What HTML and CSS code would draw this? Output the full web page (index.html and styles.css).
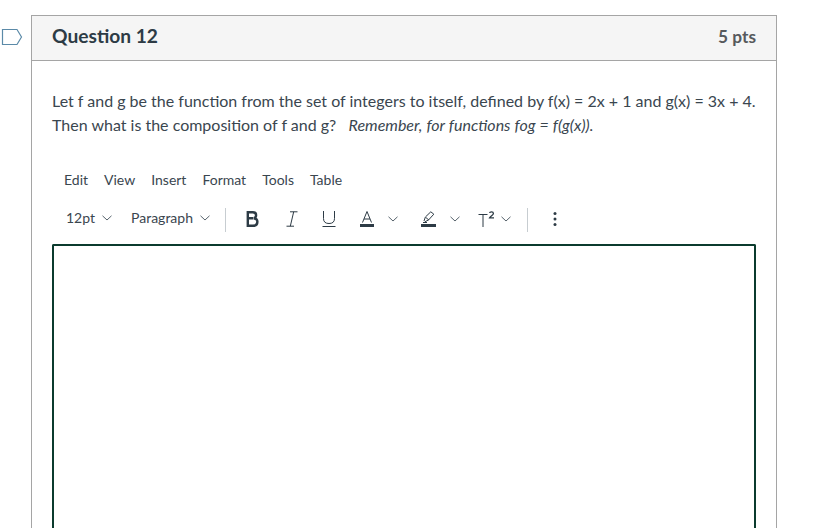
FILE: index.html
```html
<!DOCTYPE html>
<html lang="en">
<head>
<meta charset="utf-8">
<title>Question 12</title>
<link rel="stylesheet" href="styles.css">
</head>
<body>
<main class="page">
  <svg class="flag" width="23" height="18" viewBox="0 0 23 18" aria-hidden="true"><path d="M2.5 1.5H17L21.5 9L17 16.5H2.5Z" fill="none" stroke="#5b8aa8" stroke-width="1.2"/></svg>
  <section class="card">
    <header class="card-head">
      <h2 class="title">Question 12</h2>
      <span class="pts">5 pts</span>
    </header>
    <div class="card-body">
      <p class="prompt">Let f and g be the function from the set of integers to itself, defined by f(x) = 2x + 1 and g(x) = 3x + 4. Then what is the composition of f and g?&nbsp; &nbsp;<em class="hint">Remember, for functions fog = f(g(x)).</em></p>
      <nav class="menu">
        <span>Edit</span><span>View</span><span>Insert</span><span>Format</span><span>Tools</span><span>Table</span>
      </nav>
      <div class="toolbar">
        <span class="select select-size">12pt<svg class="chev" width="10" height="6" viewBox="0 0 10 6"><path d="M.5.8L5 5L9.5.8" /></svg></span>
        <span class="select select-para">Paragraph<svg class="chev" width="10" height="6" viewBox="0 0 10 6"><path d="M.5.8L5 5L9.5.8" /></svg></span>
        <i class="sep sep-a"></i>
        <svg class="icon icon-b" width="14" height="16" viewBox="0 0 14 16"><path d="M2.8 1.2H7.8C10 1.2 11.1 2.4 11.1 4.2C11.1 5.8 10.2 7 8.6 7.2C10.7 7.4 12.4 8.7 12.4 10.8C12.4 13.1 10.7 14.8 8 14.8H2.8ZM2.8 7.3H8" fill="none" stroke="#2d3b45" stroke-width="2.4"/></svg>
        <svg class="icon icon-i" width="14" height="16" viewBox="0 0 14 16"><path d="M5 .8H12.5M8.7 .8L5.3 15.2M1.5 15.2H9" fill="none" stroke="#2d3b45" stroke-width="1"/></svg>
        <svg class="icon icon-u" width="14" height="16" viewBox="0 0 14 16"><path d="M1.5 0V7.5C1.5 11 3.5 12.5 7 12.5S12.5 11 12.5 7.5V0" fill="none" stroke="#2d3b45" stroke-width="1"/><path d="M.5 15.5H13.5" stroke="#2d3b45" stroke-width="1"/></svg>
        <svg class="icon icon-a" width="14" height="16" viewBox="0 0 14 16"><path d="M2.5 11.5L7 0.5L11.5 11.5M4 8H10" fill="none" stroke="#2d3b45" stroke-width="1"/><path d="M0 13H14V16H0Z" fill="#2d3b45"/></svg>
        <svg class="chev chev-a" width="10" height="6" viewBox="0 0 10 6"><path d="M.5.8L5 5L9.5.8" /></svg>
        <svg class="icon icon-h" width="15" height="16" viewBox="0 0 15 16"><path d="M3 10L4.4 6L9.8 .8L12.8 3.2L7.5 9L3.8 10.8M5 6.6L8 9.2M2 11.5H6" fill="none" stroke="#2d3b45" stroke-width="1"/><path d="M0 13H15V16H0Z" fill="#2d3b45"/></svg>
        <svg class="chev chev-h" width="10" height="6" viewBox="0 0 10 6"><path d="M.5.8L5 5L9.5.8" /></svg>
        <svg class="icon icon-t" width="17" height="16" viewBox="0 0 17 16"><path d="M.5 3.5H9.5M5 3.5V16" fill="none" stroke="#2d3b45" stroke-width="1"/><path d="M11.6 2C11.8 .6 15.4 .4 15.4 2.4C15.4 3.8 12.6 5 11.6 6.8H16" fill="none" stroke="#2d3b45" stroke-width="1.3"/></svg>
        <svg class="chev chev-t" width="10" height="6" viewBox="0 0 10 6"><path d="M.5.8L5 5L9.5.8" /></svg>
        <i class="sep sep-b"></i>
        <svg class="icon icon-m" width="4" height="14" viewBox="0 0 4 14"><circle cx="2" cy="1.6" r="1.5" fill="#2d3b45"/><circle cx="2" cy="7" r="1.5" fill="#2d3b45"/><circle cx="2" cy="12.4" r="1.5" fill="#2d3b45"/></svg>
      </div>
      <div class="editor"></div>
    </div>
  </section>
</main>
</body>
</html>
```
FILE: styles.css
```css
* { box-sizing: border-box; }
html, body { margin: 0; height: 528px; overflow: hidden; background: #fff; }
body { font-family: Lato, "Open Sans", sans-serif; color: #2d3b45; }
.page { position: relative; padding: 15px 55px 0 31px; height: 528px; overflow: hidden; }
.flag { position: absolute; left: 0; top: 28px; }
.card { border: 1px solid #a5a5a5; border-bottom: 0; height: 600px; }
.card-head { height: 45px; padding: 0 20px; display: flex; align-items: center; justify-content: space-between; background: #f5f5f5; border-bottom: 1px solid #a5a5a5; }
.title { margin: 0 0 4px; font-size: 19.2px; font-weight: 700; line-height: 24px; }
.pts { font-size: 17.3px; font-weight: 700; color: #56595c; margin-bottom: 3px; }
.card-body { padding: 28px 20px 0; }
.prompt { margin: 0; font-size: 16px; line-height: 24px; color: #3a464f; }
.hint { word-spacing: 0.3px; }
.menu { display: flex; gap: 16px; margin: 33px 0 0 12px; font-size: 14px; line-height: 20px; color: #3a464f; }
.toolbar { display: flex; align-items: center; height: 24px; margin-top: 18px; font-size: 14px; color: #3a464f; }
.select { display: flex; align-items: center; gap: 7px; margin-bottom: 6px; }
.select-size { margin-left: 14px; }
.select-para { margin-left: 19px; }
.chev { flex: none; fill: none; stroke: #57636c; stroke-width: 1; }
.select .chev { margin-top: 1px; }
.sep { flex: none; width: 1px; height: 24px; background: #c7cdd1; }
.sep-a { margin-left: 15px; }
.icon { flex: none; margin-bottom: 2px; }
.toolbar > .chev { margin-bottom: 2px; }
.icon-b { margin-left: 19px; }
.icon-i { margin-left: 26px; }
.icon-u { margin-left: 23px; }
.icon-a { margin-left: 24px; }
.chev-a { margin-left: 14px; }
.icon-h { margin-left: 23px; }
.chev-h { margin-left: 14px; }
.icon-t { margin-left: 18px; }
.chev-t { margin-left: 6px; }
.sep-b { margin-left: 16px; }
.icon-m { margin-left: 25px; }
.editor { height: 400px; margin-top: 12px; border: 2px solid #0b3b2e; border-bottom: 0; border-radius: 2px 2px 0 0; }
```
